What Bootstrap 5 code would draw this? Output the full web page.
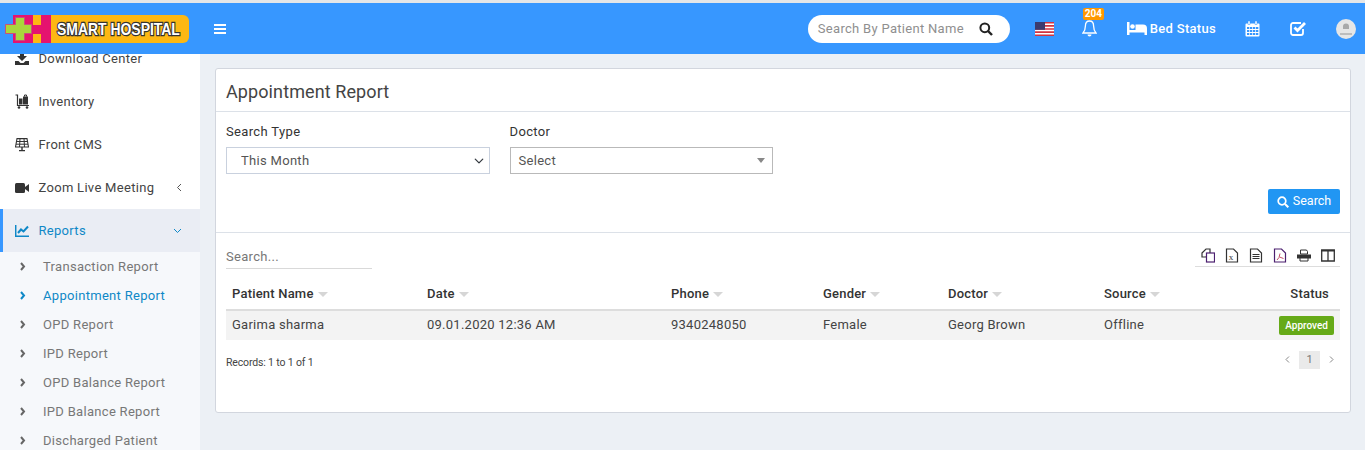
<!DOCTYPE html>
<html lang="en">
<head>
  <meta charset="UTF-8" />
  <meta name="viewport" content="width=device-width, initial-scale=1" />
  <title>Appointment Report</title>
  <link href="https://cdn.jsdelivr.net/npm/bootstrap@5.3.3/dist/css/bootstrap.min.css" rel="stylesheet" />
  <style>
    html, body { height: 450px; overflow: hidden; }
    body { font-family: Roboto, "Liberation Sans", sans-serif; font-size: 13px; color: #444; background: #ecf0f5; letter-spacing: .3px; border-top: 3px solid #e4e6e8; }
    .top-bar { height: 51px; background: #3797ff; color: #fff; }
    .logo-wrap { width: 200px; padding-left: 5px; }
    .logo-band { width: 138px; height: 28px; background: #fdb813; border-radius: 0 6px 6px 0; padding-left: 6px; overflow: hidden; }
    .logo-name { display: inline-block; transform: scaleX(.82); transform-origin: left center; font-family: "Liberation Sans", sans-serif; font-size: 17px; font-weight: 700; letter-spacing: 0; color: #fff; -webkit-text-stroke: 2.5px #333; paint-order: stroke fill; white-space: nowrap; line-height: 29px; }
    .menu-toggle { width: 42px; padding-left: 14px; }
    .patient-search { width: 202px; height: 28px; background: #fff; border-radius: 14px; padding: 0 17px 0 10px; color: #8f8f8f; margin-right: 25px; }
    .flag-link { margin-right: 28px; }
    .bell-link { position: relative; margin-right: 28px; width: 17px; }
    .bell-count { position: absolute; top: -12px; left: 1px; background: #ff9800; color: #fff; font-size: 10px; font-weight: 700; line-height: 12px; padding: 0 2px; border-radius: 2px; letter-spacing: 0; }
    .bed-link { font-size: 13px; font-weight: 500; margin-right: 29px; gap: 3px; }
    .cal-link { margin-right: 30px; }
    .check-link { margin-right: 29px; }
    .user-pic { width: 20px; height: 20px; border-radius: 50%; background: #e6e6e6; margin-right: 9px; overflow: hidden; }
    .page-body { height: 396px; }
    .side-nav { width: 200px; background: #fff; overflow: hidden; flex-shrink: 0; }
    .side-scroll { margin-top: -17px; }
    .side-item { height: 43px; padding-left: 15px; color: #444; }
    .side-item svg { flex-shrink: 0; margin-right: 9.5px; }
    .side-arrow { position: absolute; right: 18px; top: 17px; margin: 0 !important; }
    .side-arrow-down { top: 19px; }
    .side-item.side-active { background: #eaedf4; color: #0f88c7; border-left: 3px solid #3797ff; padding-left: 12px; }
    .side-sub { background: #f6f8fb; }
    .sub-item { height: 29px; padding-left: 20px; color: #777; }
    .sub-item svg { margin-right: 17px; }
    .sub-item.sub-on { color: #0f88c7; }
    .content-area { padding: 14px 14px 0 15px; }
    .report-box { height: 345px; background: #fff; border: 1px solid #d2d6de; border-radius: 3px; }
    .box-title { height: 43px; padding: 0 10px; font-size: 18px; font-weight: 400; letter-spacing: .1px; color: #444; line-height: 45px; margin: 0; border-bottom: 1px solid #dce1e8; }
    .filter-area { height: 121px; padding: 11px 10px 0; border-bottom: 1px solid #dce1e8; }
    .filter-row { --bs-gutter-x: 20px; }
    .filter-label { font-weight: 400; color: #333; margin-bottom: 7px; line-height: 17px; display: block; letter-spacing: .35px; }
    .filter-select { height: 27px; font-size: 13px; border: 1px solid #c9d1de; border-radius: 0; padding: 0 0 0 14px; color: #555; background-position: right 5px center; background-size: 10px 10px; letter-spacing: .3px; }
    .doctor-select { border: 1px solid #b9b9b9; padding: 0 8px; height: 27px; color: #555; }
    .doctor-caret { width: 0; height: 0; border-left: 4px solid transparent; border-right: 4px solid transparent; border-top: 5px solid #888; margin-right: -1px; }
    .find-btn { background: #2196f3; border: 0; color: #fff; height: 25px; width: 72px; font-size: 12.5px; border-radius: 2px; padding: 0; letter-spacing: 0; margin-top: 15px; font-weight: 400; }
    .table-area { padding: 0 10px; }
    .quick-search { width: 146px; height: 25px; margin-top: 11px; border-bottom: 1px solid #d9d9d9; color: #777; line-height: 25px; }
    .export-tools { width: 145px; height: 24px; margin-top: 10px; border-bottom: 1px solid #ddd; padding: 5px 0 0 6px; gap: 10px; justify-content: flex-start; }
    .report-table { --bs-table-bg: transparent; margin: 8px 0 0; table-layout: fixed; width: 100%; color: #444; }
    .report-table th { font-weight: 500; font-size: 13px; color: #333; padding: 0 6px 6px; height: 33px; border-bottom: 2px solid #ddd; letter-spacing: .2px; }
    .report-table th.status-head { padding-right: 11px; }
    .report-table td { padding: 0 6px 2px; height: 30px; background: #f3f3f3; border: 0; vertical-align: middle; color: #444; letter-spacing: .25px; }
    .sort-caret { display: inline-block; width: 0; height: 0; border-left: 5px solid transparent; border-right: 5px solid transparent; border-top: 5px solid #d6d6d6; margin-left: 4px; vertical-align: 1px; }
    .status-tag { background: #66aa18; color: #fff; font-size: 10px; font-weight: 500; line-height: 19px; height: 19px; display: inline-block; padding: 0 6px; border-radius: 2px; letter-spacing: 0; vertical-align: middle; }
    .list-foot { padding-top: 9px; }
    .records-note { font-size: 10.5px; color: #444; letter-spacing: -.15px; margin-top: 6px; }
    .page-nums { color: #888; gap: 9px; margin-right: 6px; }
    .page-cur { width: 21px; height: 18px; background: #eaeaea; color: #777; text-align: center; line-height: 18px; font-size: 11px; letter-spacing: 0; }
    .col-name { width: 195px; }
    .col-date { width: 244px; }
    .col-phone { width: 152px; }
    .col-gender { width: 125px; }
    .col-doctor { width: 156px; }
    .col-source { width: 130px; }
  </style>
</head>
<body>

<header class="top-bar d-flex align-items-center">
  <div class="logo-wrap d-flex">
    <svg width="46" height="28" viewBox="0 0 46 28" class="d-block flex-shrink-0">
      <rect x="8" y="0" width="38" height="28" fill="#e5136f"/>
      <rect x="28" y="0" width="8" height="10" fill="#fdb813"/>
      <rect x="28" y="19" width="8" height="9" fill="#fdb813"/>
      <path d="M10.500 2.500h9v7h7v9h-7v7h-9v-7H.500v-9h10Z" fill="#a9d63c" stroke="#c94f7a" stroke-width="1"/>
    </svg>
    <div class="logo-band"><span class="logo-name">SMART HOSPITAL</span></div>
  </div>
  <div class="menu-toggle">
    <svg width="12" height="10" viewBox="0 0 12 10" class="d-block"><path d="M0 0h12v2H0zM0 4h12v2H0zM0 8h12v2H0z" fill="#fff"/></svg>
  </div>
  <div class="ms-auto d-flex align-items-center">
    <div class="patient-search d-flex align-items-center justify-content-between">
      <span>Search By Patient Name</span>
      <svg width="14" height="14" viewBox="0 0 14 14"><circle cx="5.800" cy="5.800" r="4.400" fill="none" stroke="#222" stroke-width="2"/><path d="M9 9l4 4" stroke="#222" stroke-width="2.400"/></svg>
    </div>
    <div class="flag-link">
      <svg width="19" height="14" viewBox="0 0 19 14" class="d-block">
        <rect width="19" height="14" fill="#fff"/>
        <path d="M0 0h19v1.600H0zM0 3.100h19v1.600H0zM0 6.200h19v1.600H0zM0 9.300h19v1.600H0zM0 12.400h19V14H0z" fill="#d2333f"/>
        <rect width="10" height="7.800" fill="#3c3b6e"/>
      </svg>
    </div>
    <div class="bell-link">
      <svg width="15" height="17" viewBox="0 0 15 17" class="d-block"><path d="M7.500 1C4.600 1 3.400 3.300 3.400 6c0 3.500-1 5.300-2.400 7h13c-1.400-1.700-2.400-3.500-2.400-7C11.600 3.300 10.400 1 7.500 1Z" fill="none" stroke="#fff" stroke-width="1.300"/><path d="M5.500 14.500a2 2 0 0 0 4 0Z" fill="#fff"/></svg>
      <span class="bell-count">204</span>
    </div>
    <div class="bed-link d-flex align-items-center">
      <svg width="20" height="13" viewBox="0 0 20 13"><path d="M0 0h2.500v8H20v5h-2.500v-2.500h-15V13H0Z" fill="#fff"/><circle cx="5.500" cy="4.500" r="2.300" fill="#fff"/><path d="M8.500 2.500H16a4 4 0 0 1 4 4V8H8.500Z" fill="#fff"/></svg>
      <span>Bed Status</span>
    </div>
    <div class="cal-link">
      <svg width="15" height="16" viewBox="0 0 15 16" class="d-block"><path d="M1.500 2.500h12a1 1 0 0 1 1 1v11a1 1 0 0 1-1 1h-12a1 1 0 0 1-1-1v-11a1 1 0 0 1 1-1Z" fill="#fff"/><path d="M3 0h2v3.500H3zM10 0h2v3.500h-2z" fill="#fff" stroke="#3797ff" stroke-width=".5"/><path d="M2 6h2.300v2H2zM5 6h2.300v2H5zM8 6h2.300v2H8zM11 6h2.300v2H11zM2 9h2.300v2H2zM5 9h2.300v2H5zM8 9h2.300v2H8zM11 9h2.300v2H11zM2 12h2.300v2H2zM5 12h2.300v2H5zM8 12h2.300v2H8zM11 12h2.300v2H11z" fill="#3797ff"/></svg>
    </div>
    <div class="check-link">
      <svg width="17" height="15" viewBox="0 0 17 15" class="d-block"><path d="M13 8v4a2 2 0 0 1-2 2H3a2 2 0 0 1-2-2V4a2 2 0 0 1 2-2h8" fill="none" stroke="#fff" stroke-width="1.800"/><path d="M4.500 6.500l3 3L15 2" fill="none" stroke="#fff" stroke-width="2.800"/></svg>
    </div>
    <div class="user-pic">
      <svg width="20" height="20" viewBox="0 0 20 20" class="d-block"><path d="M7 10V7.500a3 3 0 0 1 6 0V10Z" fill="#a9a9a9"/><path d="M4 14h12v2H4z" fill="#bdbdbd"/></svg>
    </div>
  </div>
</header>

<div class="page-body d-flex">
  <nav class="side-nav">
    <div class="side-scroll">
      <div class="side-item d-flex align-items-center position-relative">
        <svg width="14" height="13" viewBox="0 0 14 13"><path d="M5 0h4v4h3L7 9 2 4h3Z" fill="#333"/><path d="M0 9h3.500l2 2h3l2-2H14v4H0Z" fill="#333"/></svg>
        <span>Download Center</span>
      </div>
      <div class="side-item d-flex align-items-center">
        <svg width="14" height="15" viewBox="0 0 14 15"><path d="M.5 1h2v10.500H14" fill="none" stroke="#333" stroke-width="1.200"/><path d="M4 4.500h3.500V10.500H4zM8 2.500h5V10.500H8z" fill="#333"/><path d="M9.500 2.500V1h2v1.500" fill="none" stroke="#333"/><circle cx="4" cy="13.500" r="1.300" fill="#333"/><circle cx="12" cy="13.500" r="1.300" fill="#333"/></svg>
        <span>Inventory</span>
      </div>
      <div class="side-item d-flex align-items-center">
        <svg width="14" height="14" viewBox="0 0 14 14"><path d="M2 .6h10L13.500 9H.5Z" fill="none" stroke="#333" stroke-width="1.100"/><path d="M1.500 3.500h11M1 6.200h12M5 .6 4.500 9M9 .6 9.500 9" stroke="#333" stroke-width="1"/><path d="M6.300 9h1.400v3H6.300zM4 12h6v1.200H4z" fill="#333"/></svg>
        <span>Front CMS</span>
      </div>
      <div class="side-item d-flex align-items-center position-relative">
        <svg width="14" height="10" viewBox="0 0 14 10"><rect width="10" height="10" rx="1.500" fill="#333"/><path d="M10 4 14 1v8L10 6Z" fill="#333"/></svg>
        <span>Zoom Live Meeting</span>
        <svg class="side-arrow" width="6" height="9" viewBox="0 0 6 9"><path d="M5 1 1.500 4.500 5 8" fill="none" stroke="#555" stroke-width="1"/></svg>
      </div>
      <div class="side-item side-active d-flex align-items-center position-relative">
        <svg width="14" height="12" viewBox="0 0 14 12"><path d="M.7 0v11.200H14" fill="none" stroke="#0f88c7" stroke-width="1.500"/><path d="M3 8l3-3.500 2.500 2L13 1.500" fill="none" stroke="#0f88c7" stroke-width="2"/></svg>
        <span>Reports</span>
        <svg class="side-arrow side-arrow-down" width="9" height="6" viewBox="0 0 9 6"><path d="M1 1l3.500 3.500L8 1" fill="none" stroke="#0f88c7" stroke-width="1"/></svg>
      </div>
      <div class="side-sub">
        <div class="sub-item d-flex align-items-center"><svg width="6" height="9" viewBox="0 0 6 9"><path d="M1 1l3 3.500L1 8" fill="none" stroke="#666" stroke-width="2"/></svg><span>Transaction Report</span></div>
        <div class="sub-item sub-on d-flex align-items-center"><svg width="6" height="9" viewBox="0 0 6 9"><path d="M1 1l3 3.500L1 8" fill="none" stroke="#0f88c7" stroke-width="2"/></svg><span>Appointment Report</span></div>
        <div class="sub-item d-flex align-items-center"><svg width="6" height="9" viewBox="0 0 6 9"><path d="M1 1l3 3.500L1 8" fill="none" stroke="#666" stroke-width="2"/></svg><span>OPD Report</span></div>
        <div class="sub-item d-flex align-items-center"><svg width="6" height="9" viewBox="0 0 6 9"><path d="M1 1l3 3.500L1 8" fill="none" stroke="#666" stroke-width="2"/></svg><span>IPD Report</span></div>
        <div class="sub-item d-flex align-items-center"><svg width="6" height="9" viewBox="0 0 6 9"><path d="M1 1l3 3.500L1 8" fill="none" stroke="#666" stroke-width="2"/></svg><span>OPD Balance Report</span></div>
        <div class="sub-item d-flex align-items-center"><svg width="6" height="9" viewBox="0 0 6 9"><path d="M1 1l3 3.500L1 8" fill="none" stroke="#666" stroke-width="2"/></svg><span>IPD Balance Report</span></div>
        <div class="sub-item d-flex align-items-center"><svg width="6" height="9" viewBox="0 0 6 9"><path d="M1 1l3 3.500L1 8" fill="none" stroke="#666" stroke-width="2"/></svg><span>Discharged Patient</span></div>
      </div>
    </div>
  </nav>

  <main class="content-area flex-grow-1">
    <section class="report-box">
      <h3 class="box-title">Appointment Report</h3>
      <div class="filter-area">
        <div class="row filter-row">
          <div class="col-3">
            <label class="filter-label">Search Type</label>
            <select class="form-select filter-select"><option>This Month</option></select>
          </div>
          <div class="col-3">
            <label class="filter-label">Doctor</label>
            <div class="doctor-select d-flex align-items-center justify-content-between"><span>Select</span><span class="doctor-caret"></span></div>
          </div>
        </div>
        <div class="d-flex justify-content-end">
          <button type="button" class="btn find-btn d-flex align-items-center justify-content-center gap-1">
            <svg width="12" height="12" viewBox="0 0 12 12"><circle cx="5" cy="5" r="3.800" fill="none" stroke="#fff" stroke-width="1.700"/><path d="M8 8l3.300 3.300" stroke="#fff" stroke-width="2"/></svg>
            <span>Search</span>
          </button>
        </div>
      </div>
      <div class="table-area">
        <div class="d-flex justify-content-between">
          <div class="quick-search">Search...</div>
          <div class="export-tools d-flex align-items-start">
            <svg width="14" height="15" viewBox="0 0 14 15"><path d="M1 5 5 1h4v4L5 9H1Z" fill="none" stroke="#333" stroke-width="1.200"/><rect x="5.500" y="5" width="8" height="9" fill="#fff" stroke="#4b1f6f" stroke-width="1.200"/></svg>
            <svg width="14" height="15" viewBox="0 0 14 15"><path d="M1.500 1h7l4 4v9h-11Z" fill="none" stroke="#333" stroke-width="1.200"/><text x="3.800" y="12" font-size="9" font-family="Liberation Serif, serif" fill="#333">x</text></svg>
            <svg width="14" height="15" viewBox="0 0 14 15"><path d="M1.500 1h7l4 4v9h-11Z" fill="none" stroke="#333" stroke-width="1.200"/><path d="M3.500 6.500h7M3.500 8.500h7M3.500 10.500h7" stroke="#333"/></svg>
            <svg width="14" height="15" viewBox="0 0 14 15"><path d="M1.500 1h7l4 4v9h-11Z" fill="none" stroke="#4b1f6f" stroke-width="1.200"/><path d="M7 5.500 6 9.500l-2 2.500M6.500 9l4 1.500" fill="none" stroke="#c2506a"/></svg>
            <svg width="14" height="15" viewBox="0 0 14 15"><path d="M3.500 2h6l1 1.500V6h-7Z" fill="none" stroke="#333"/><path d="M0 6.500h14v4H0Z" fill="#333"/><path d="M3 10h8v3H3Z" fill="#fff" stroke="#333"/></svg>
            <svg width="14" height="15" viewBox="0 0 14 15"><path d="M.7 2h12.600v11H.7ZM7 2v11" fill="none" stroke="#333" stroke-width="1.300"/><path d="M0 2h14v1.500H0z" fill="#333"/></svg>
          </div>
        </div>
        <table class="table report-table">
          <colgroup>
            <col class="col-name"><col class="col-date"><col class="col-phone"><col class="col-gender"><col class="col-doctor"><col class="col-source"><col>
          </colgroup>
          <thead>
            <tr>
              <th>Patient Name<span class="sort-caret"></span></th>
              <th>Date<span class="sort-caret"></span></th>
              <th>Phone<span class="sort-caret"></span></th>
              <th>Gender<span class="sort-caret"></span></th>
              <th>Doctor<span class="sort-caret"></span></th>
              <th>Source<span class="sort-caret"></span></th>
              <th class="text-end status-head">Status</th>
            </tr>
          </thead>
          <tbody>
            <tr>
              <td>Garima sharma</td>
              <td>09.01.2020 12:36 AM</td>
              <td>9340248050</td>
              <td>Female</td>
              <td>Georg Brown</td>
              <td>Offline</td>
              <td class="text-end"><span class="status-tag">Approved</span></td>
            </tr>
          </tbody>
        </table>
        <div class="list-foot d-flex justify-content-between align-items-center">
          <span class="records-note">Records: 1 to 1 of 1</span>
          <div class="page-nums d-flex align-items-center">
            <svg width="5" height="7" viewBox="0 0 5 7"><path d="M4 .5 1 3.500 4 6.500" fill="none" stroke="#888"/></svg>
            <span class="page-cur">1</span>
            <svg width="5" height="7" viewBox="0 0 5 7"><path d="M1 .5 4 3.500 1 6.500" fill="none" stroke="#888"/></svg>
          </div>
        </div>
      </div>
    </section>
  </main>
</div>

<script src="https://cdn.jsdelivr.net/npm/bootstrap@5.3.3/dist/js/bootstrap.bundle.min.js"></script>
</body>
</html>
